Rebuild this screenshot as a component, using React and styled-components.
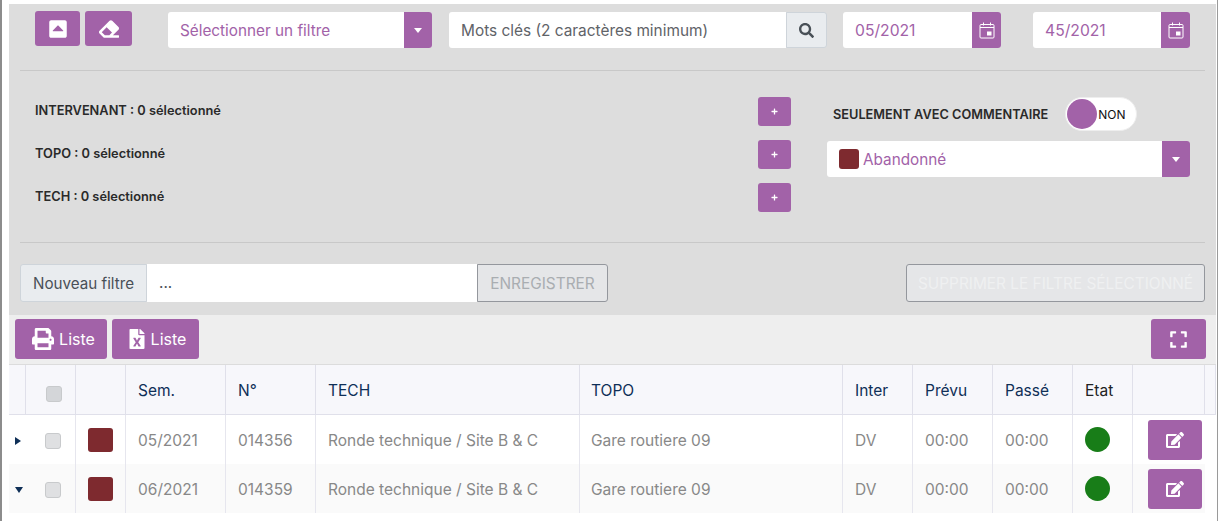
import React from "react";
import styled, { createGlobalStyle } from "styled-components";
import {
  FaCaretSquareUp,
  FaEraser,
  FaSearch,
  FaPrint,
  FaFileExcel,
  FaExpand,
  FaEdit,
  FaPlus,
} from "react-icons/fa";

const purple = "#a262a8";
const brown = "#7e2a2f";

const Global = createGlobalStyle`
  * { box-sizing: border-box; }
  html, body { margin: 0; padding: 0; background: #fff; overflow: hidden; }
  body { font-family: Inter, "Liberation Sans", sans-serif; }
`;

const Page = styled.div`
  width: 1220px;
  height: 521px;
  padding: 4px 3px 0 7px;
  border-left: 2px solid #8c8c8c;
  overflow: hidden;
  position: relative;
`;
const Edge = styled.div`
  position: absolute;
  top: 0;
  right: 2px;
  bottom: 0;
  width: 1px;
  background: #9a9a9a;
`;
const Panel = styled.section`
  width: 1207px;
  height: 311px;
  background: #dddddd;
  padding: 7px 11px 0 11px;
`;
const TopRow = styled.div`
  display: flex;
  align-items: flex-start;
  height: 59px;
  padding-left: 15px;
`;
const SquareBtn = styled.button`
  width: ${(p) => p.$w}px;
  height: 35px;
  margin-right: 5px;
  border: none;
  border-radius: 3px;
  background: ${purple};
  color: #fff;
  display: flex;
  align-items: center;
  justify-content: center;
  padding: 0;
  font-size: 20px;
`;
const Select = styled.div`
  width: ${(p) => p.$w}px;
  height: 36px;
  margin: ${(p) => p.$m || "1px 0 0 0"};
  background: #fff;
  border-radius: 3px;
  display: flex;
  align-items: center;
  color: ${purple};
  font-size: 15.3px;
  overflow: hidden;
`;
const SelectText = styled.span`
  flex: 1;
  display: flex;
  align-items: center;
  gap: 4px;
  padding-left: 12px;
`;
const SelectArrow = styled.span`
  width: 28px;
  height: 100%;
  background: ${purple};
  display: flex;
  align-items: center;
  justify-content: center;
  &::after {
    content: "";
    border-left: 4px solid transparent;
    border-right: 4px solid transparent;
    border-top: 5px solid #fff;
  }
`;
const Keywords = styled.div`
  width: 378px;
  height: 36px;
  margin: 1px 0 0 17px;
  display: flex;
`;
const KeywordInput = styled.div`
  flex: 1;
  background: #fff;
  border-radius: 3px 0 0 3px;
  color: #5f6368;
  font-size: 15.4px;
  line-height: 37px;
  padding-left: 12px;
`;
const SearchBtn = styled.div`
  width: 41px;
  background: #e9ecef;
  border: 1px solid #ced4da;
  border-radius: 0 3px 3px 0;
  color: #495057;
  font-size: 15px;
  display: flex;
  align-items: center;
  justify-content: center;
`;
const DateField = styled.div`
  width: ${(p) => p.$w}px;
  height: 36px;
  margin: 1px 0 0 ${(p) => p.$ml}px;
  background: #fff;
  border-radius: 3px;
  display: flex;
  overflow: hidden;
`;
const DateText = styled.span`
  flex: 1;
  color: ${purple};
  font-size: 15.7px;
  line-height: 37px;
  padding-left: 12px;
`;
const DateBtn = styled.span`
  width: 29px;
  background: ${purple};
  display: flex;
  align-items: center;
  justify-content: center;
`;
const Divider = styled.hr`
  margin: 0;
  border: none;
  border-top: 1px solid #c8c8c8;
  width: 1185px;
`;
const Middle = styled.div`
  display: flex;
  height: 171px;
  padding-top: 26px;
`;
const PickerList = styled.div`
  width: 771px;
  padding-left: 15px;
  display: flex;
  flex-direction: column;
  gap: 14px;
`;
const PickerRow = styled.div`
  height: 29px;
  display: flex;
  align-items: center;
  justify-content: space-between;
`;
const PickerLabel = styled.span`
  font-size: 12.8px;
  font-weight: 600;
  color: #2a2a2a;
  padding-bottom: 2px;
`;
const PlusBtn = styled.span`
  width: 33px;
  height: 29px;
  border-radius: 3px;
  background: ${purple};
  color: #fff;
  font-size: 7px;
  display: flex;
  align-items: center;
  justify-content: center;
`;
const Options = styled.div`
  margin-left: 36px;
  width: 363px;
`;
const CommentRow = styled.div`
  height: 34px;
  padding-left: 6px;
  display: flex;
  align-items: center;
  gap: 17px;
`;
const CommentLabel = styled.span`
  font-size: 12.75px;
  font-weight: 600;
  color: #2a2a2a;
  white-space: nowrap;
`;
const Toggle = styled.div`
  width: 72px;
  height: 34px;
  border-radius: 17px;
  background: #fff;
  border: 1px solid #eee;
  display: flex;
  align-items: center;
  padding-left: 1px;
  font-size: 12px;
  color: #111;
`;
const Knob = styled.span`
  width: 30px;
  height: 30px;
  margin-right: 1px;
  border-radius: 50%;
  background: ${purple};
`;
const Swatch = styled.span`
  display: block;
  width: ${(p) => p.$s}px;
  height: ${(p) => p.$h || p.$s}px;
  border-radius: 3px;
  background: ${brown};
`;
const SaveRow = styled.div`
  display: flex;
  align-items: flex-end;
  justify-content: space-between;
  padding-top: 21px;
  width: 1185px;
`;
const SaveGroup = styled.div`
  display: flex;
  height: 38px;
  font-size: 15.2px;
`;
const SaveLabel = styled.span`
  width: 127px;
  background: #e9ecef;
  border: 1px solid #ced4da;
  border-radius: 3px 0 0 3px;
  color: #495057;
  line-height: 37px;
  text-align: center;
`;
const SaveInput = styled.span`
  width: 330px;
  background: #fff;
  color: #495057;
  line-height: 38px;
  padding-left: 12px;
`;
const GhostBtn = styled.span`
  border: 1px solid #94979d;
  border-radius: ${(p) => p.$r};
  color: ${(p) => p.$color};
  font-size: 15.4px;
  text-align: center;
  background: #e5e6e8;
  white-space: nowrap;
  height: ${(p) => p.$h}px;
  line-height: ${(p) => p.$h - 1}px;
  width: ${(p) => p.$w}px;
`;
const Toolbar = styled.div`
  width: 1207px;
  height: 50px;
  background: #eeeeee;
  border-bottom: 1px solid #dcdcdc;
  padding: 4px 10px 0 6px;
  display: flex;
  gap: 5px;
`;
const ToolBtn = styled.button`
  height: 40px;
  width: ${(p) => p.$w}px;
  margin-left: ${(p) => (p.$push ? "auto" : 0)};
  border: none;
  border-radius: 3px;
  background: ${purple};
  color: #fff;
  font: 16px Inter, "Liberation Sans", sans-serif;
  display: flex;
  align-items: center;
  justify-content: center;
  gap: ${(p) => p.$gap || 5}px;
  padding: 0 0 0 ${(p) => p.$shift || 0}px;
  svg {
    font-size: ${(p) => p.$icon || 22}px;
  }
`;
const Table = styled.table`
  width: 1207px;
  table-layout: fixed;
  border-collapse: separate;
  border-spacing: 0;
  font-size: 15.5px;
`;
const Th = styled.th`
  height: 50px;
  padding: 2px 0 0 ${(p) => p.$pad ?? 12}px;
  background: #f7f7fb;
  border-right: 1px solid #e0e0ea;
  border-bottom: 1px solid #e0e0ea;
  color: ${(p) => (p.$dark ? "#222" : "#0f2f57")};
  font-weight: 400;
  text-align: left;
`;
const Row = styled.tr`
  background: ${(p) => (p.$alt ? "#fafafa" : "#fff")};
`;
const Td = styled.td`
  height: 49px;
  padding: ${(p) => (p.$flush ? 0 : 2)}px 0 0 ${(p) => p.$pad ?? 12}px;
  border-right: ${(p) => (p.$noLine ? "none" : "1px solid #e6e6ee")};
  color: #888888;
  white-space: nowrap;
`;
const Check = styled.span`
  display: block;
  width: 16px;
  height: 16px;
  margin: ${(p) => p.$mt || 0}px 0 0 ${(p) => p.$ml}px;
  border: 1px solid #c8cacc;
  border-radius: 3px;
  background: ${(p) => p.$bg};
`;
const Arrow = styled.span`
  display: block;
  margin-left: 6px;
  width: 0;
  height: 0;
  ${(p) =>
    p.$open
      ? `border-left: 4px solid transparent; border-right: 4px solid transparent; border-top: 6px solid #0f2f57;`
      : `border-top: 4px solid transparent; border-bottom: 4px solid transparent; border-left: 6px solid #0f2f57;`}
`;
const Dot = styled.span`
  display: block;
  width: 25px;
  height: 25px;
  border-radius: 50%;
  background: #187d18;
`;
const EditBtn = styled.span`
  width: 54px;
  height: 40px;
  margin-left: 3px;
  border-radius: 3px;
  background: ${purple};
  color: #fff;
  font-size: 18px;
  display: flex;
  align-items: center;
  justify-content: center;
`;

function CalendarIcon() {
  return (
    <svg width="16" height="17" viewBox="0 0 16 17" fill="none" stroke="#fff">
      <path d="M4.5 0.5v3M11.5 0.5v3" />
      <rect x="1" y="2.5" width="14" height="13.5" rx="1" />
      <path d="M1 5.5h14" />
      <rect x="8" y="9.5" width="4.5" height="4" fill="#fff" stroke="none" />
    </svg>
  );
}

const widths = [17, 50, 50, 100, 90, 264, 263, 70, 80, 80, 60, 72, 11];
const rows = [
  { sem: "05/2021", num: "014356" },
  { sem: "06/2021", num: "014359", open: true, alt: true },
];

export default function App() {
  return (
    <>
      <Global />
      <Page>
        <Edge />
        <Panel>
          <TopRow>
            <SquareBtn $w={45}>
              <FaCaretSquareUp />
            </SquareBtn>
            <SquareBtn $w={47}>
              <FaEraser />
            </SquareBtn>
            <Select $w={264} $m="1px 0 0 31px">
              <SelectText>Sélectionner un filtre</SelectText>
              <SelectArrow />
            </Select>
            <Keywords>
              <KeywordInput>Mots clés (2 caractères minimum)</KeywordInput>
              <SearchBtn>
                <FaSearch />
              </SearchBtn>
            </Keywords>
            <DateField $w={158} $ml={16}>
              <DateText>05/2021</DateText>
              <DateBtn>
                <CalendarIcon />
              </DateBtn>
            </DateField>
            <DateField $w={157} $ml={32}>
              <DateText>45/2021</DateText>
              <DateBtn>
                <CalendarIcon />
              </DateBtn>
            </DateField>
          </TopRow>
          <Divider />
          <Middle>
            <PickerList>
              {["INTERVENANT", "TOPO", "TECH"].map((name) => (
                <PickerRow key={name}>
                  <PickerLabel>{name} : 0 sélectionné</PickerLabel>
                  <PlusBtn>
                    <FaPlus />
                  </PlusBtn>
                </PickerRow>
              ))}
            </PickerList>
            <Options>
              <CommentRow>
                <CommentLabel>SEULEMENT AVEC COMMENTAIRE</CommentLabel>
                <Toggle>
                  <Knob />
                  NON
                </Toggle>
              </CommentRow>
              <Select $w={363} $m="10px 0 0 0">
                <SelectText>
                  <Swatch $s={20} />
                  Abandonné
                </SelectText>
                <SelectArrow />
              </Select>
            </Options>
          </Middle>
          <Divider />
          <SaveRow>
            <SaveGroup>
              <SaveLabel>Nouveau filtre</SaveLabel>
              <SaveInput>...</SaveInput>
              <GhostBtn $w={131} $h={38} $r="0 3px 3px 0" $color="#a9adb1">
                ENREGISTRER
              </GhostBtn>
            </SaveGroup>
            <GhostBtn $w={299} $h={38} $r="3px" $color="#eff0f1">
              SUPPRIMER LE FILTRE SÉLECTIONNÉ
            </GhostBtn>
          </SaveRow>
        </Panel>
        <Toolbar>
          <ToolBtn $w={92} $shift={5}>
            <FaPrint />
            Liste
          </ToolBtn>
          <ToolBtn $w={87} $icon={20} $shift={2} $gap={4}>
            <FaFileExcel />
            Liste
          </ToolBtn>
          <ToolBtn $w={55} $push $icon={19}>
            <FaExpand />
          </ToolBtn>
        </Toolbar>
        <Table>
          <colgroup>
            {widths.map((w, i) => (
              <col key={i} style={{ width: w }} />
            ))}
          </colgroup>
          <thead>
            <tr>
              <Th $pad={0} />
              <Th $pad={0}>
                <Check $ml={20} $mt={6} $bg="#d4d6d9" />
              </Th>
              <Th $pad={0} />
              <Th>Sem.</Th>
              <Th>N°</Th>
              <Th>TECH</Th>
              <Th $pad={11}>TOPO</Th>
              <Th>Inter</Th>
              <Th>Prévu</Th>
              <Th>Passé</Th>
              <Th $dark>Etat</Th>
              <Th $pad={0} />
              <Th $pad={0} />
            </tr>
          </thead>
          <tbody>
            {rows.map((r) => (
              <Row key={r.num} $alt={r.alt}>
                <Td $pad={0} $noLine>
                  <Arrow $open={r.open} />
                </Td>
                <Td $pad={0}>
                  <Check $ml={19} $bg="#dfe0e2" />
                </Td>
                <Td $pad={12} $flush>
                  <Swatch $s={25} $h={24} />
                </Td>
                <Td>{r.sem}</Td>
                <Td>{r.num}</Td>
                <Td>Ronde technique / Site B &amp; C</Td>
                <Td $pad={11}>Gare routiere 09</Td>
                <Td>DV</Td>
                <Td>00:00</Td>
                <Td>00:00</Td>
                <Td $flush>
                  <Dot />
                </Td>
                <Td $pad={12} $noLine $flush>
                  <EditBtn>
                    <FaEdit />
                  </EditBtn>
                </Td>
              </Row>
            ))}
          </tbody>
        </Table>
      </Page>
    </>
  );
}
